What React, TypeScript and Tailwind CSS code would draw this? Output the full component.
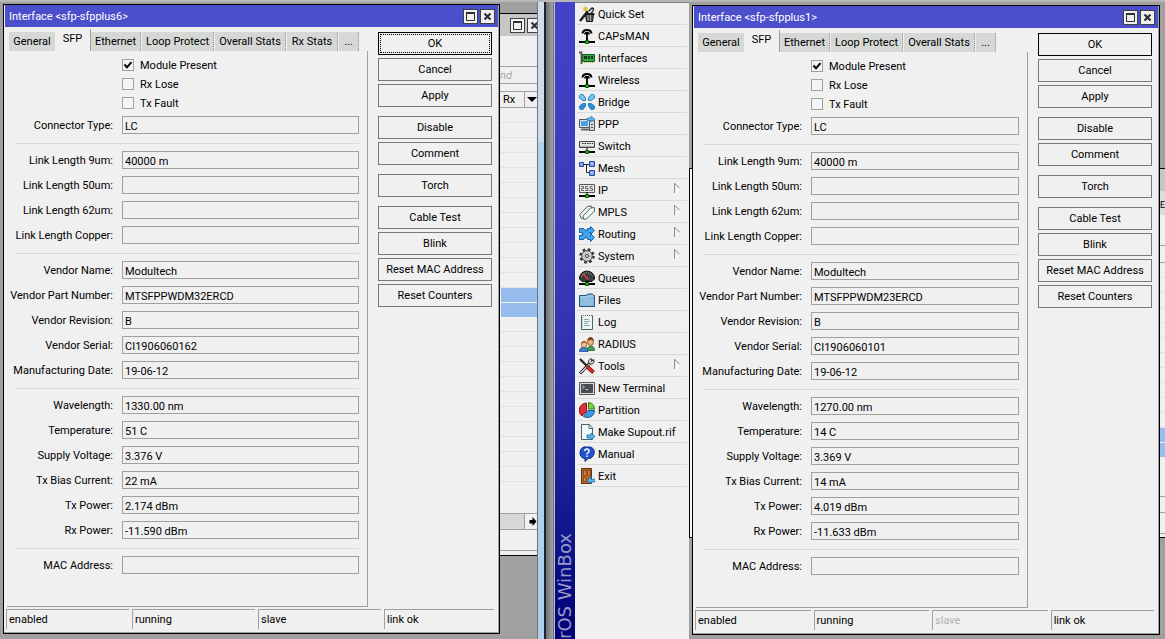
import { useId, type ReactNode } from "react";
import clsx from "clsx";

type Field = { label: string; value: string };

type Status = { text: string; muted?: boolean };

type InterfaceData = {
  name: string;
  tabs: string[];
  groups: Field[][];
  statuses: Status[];
  focused?: boolean;
};

const makeGroups = (
  part: string,
  serial: string,
  wavelength: string,
  temperature: string,
  voltage: string,
  bias: string,
  tx: string,
  rx: string
): Field[][] => [
  [{ label: "Connector Type:", value: "LC" }],
  [
    { label: "Link Length 9um:", value: "40000 m" },
    { label: "Link Length 50um:", value: "" },
    { label: "Link Length 62um:", value: "" },
    { label: "Link Length Copper:", value: "" },
  ],
  [
    { label: "Vendor Name:", value: "Modultech" },
    { label: "Vendor Part Number:", value: part },
    { label: "Vendor Revision:", value: "B" },
    { label: "Vendor Serial:", value: serial },
    { label: "Manufacturing Date:", value: "19-06-12" },
  ],
  [
    { label: "Wavelength:", value: wavelength },
    { label: "Temperature:", value: temperature },
    { label: "Supply Voltage:", value: voltage },
    { label: "Tx Bias Current:", value: bias },
    { label: "Tx Power:", value: tx },
    { label: "Rx Power:", value: rx },
  ],
  [{ label: "MAC Address:", value: "" }],
];

const sfp6: InterfaceData = {
  name: "sfp-sfpplus6",
  tabs: ["Ethernet", "Loop Protect", "Overall Stats", "Rx Stats", "..."],
  groups: makeGroups(
    "MTSFPPWDM32ERCD",
    "CI1906060162",
    "1330.00 nm",
    "51 C",
    "3.376 V",
    "22 mA",
    "2.174 dBm",
    "-11.590 dBm"
  ),
  statuses: [
    { text: "enabled" },
    { text: "running" },
    { text: "slave" },
    { text: "link ok" },
  ],
  focused: true,
};

const sfp1: InterfaceData = {
  name: "sfp-sfpplus1",
  tabs: ["Ethernet", "Loop Protect", "Overall Stats", "..."],
  groups: makeGroups(
    "MTSFPPWDM23ERCD",
    "CI1906060101",
    "1270.00 nm",
    "14 C",
    "3.369 V",
    "14 mA",
    "4.019 dBm",
    "-11.633 dBm"
  ),
  statuses: [
    { text: "enabled" },
    { text: "running" },
    { text: "slave", muted: true },
    { text: "link ok" },
  ],
};

const buttonGroups = [
  ["OK", "Cancel", "Apply"],
  ["Disable", "Comment"],
  ["Torch"],
  ["Cable Test", "Blink", "Reset MAC Address", "Reset Counters"],
];

function WindowButton({ kind }: { kind: "maximize" | "close" }) {
  return (
    <button
      aria-label={kind}
      className="flex size-[15px] shrink-0 items-center justify-center border border-[#404040] bg-[#f0f0f0]"
    >
      <svg viewBox="0 0 11 11" className="size-[11px]" fill="none" stroke="#303030">
        {kind === "maximize" ? (
          <>
            <path d="M1.5 1.5h8v8h-8z" />
            <path d="M1 2h9" strokeWidth="2" />
          </>
        ) : (
          <path d="M2.5 2.5l6 6M8.5 2.5l-6 6" strokeWidth="2.2" />
        )}
      </svg>
    </button>
  );
}

function CheckRow({ label, checked }: { label: string; checked?: boolean }) {
  return (
    <label className="flex h-3 items-center gap-1.5">
      <span className="grid size-3">
        <input
          type="checkbox"
          defaultChecked={checked}
          className="peer col-start-1 row-start-1 size-3 appearance-none border border-[#a0a0a0] bg-[#f4f4f4]"
        />
        <svg
          viewBox="0 0 12 12"
          className="pointer-events-none invisible col-start-1 row-start-1 size-3 peer-checked:visible"
          fill="none"
          stroke="#000"
          strokeWidth="2"
        >
          <path d="M2.5 5.5l2.5 2.8L9.5 3.2" />
        </svg>
      </span>
      <span className="pt-0.5">{label}</span>
    </label>
  );
}

function FieldRow({ label, value }: Field) {
  const id = useId();
  return (
    <div className="flex h-[18px] items-center gap-[9px]">
      <label htmlFor={id} className="w-[106px] shrink-0 pt-0.5 text-right whitespace-nowrap">
        {label}
      </label>
      <input
        id={id}
        readOnly
        defaultValue={value}
        className="h-[18px] min-w-0 flex-1 border border-[#a0a0a0] bg-[#f0f0f0] px-0.5 pt-0.5 outline-none"
      />
    </div>
  );
}

function InterfaceDialog({ data }: { data: InterfaceData }) {
  return (
    <section className="border border-black bg-[#f0f0f0]">
      <div className="border-r border-b border-[#a0a0a0] pb-[3px]">
        <header className="ml-px flex h-[22px] items-center gap-0.5 bg-[#4c4fcb] pr-[3px] pl-1 text-white">
          <h2 className="flex-1 pt-0.5 whitespace-nowrap">Interface &lt;{data.name}&gt;</h2>
          <WindowButton kind="maximize" />
          <WindowButton kind="close" />
        </header>

        <div className="flex gap-2.5 pr-1.5 pl-[3px]">
          <div className="min-w-0 flex-1">
            <div role="tablist" className="flex h-6 items-end pt-0.5 pl-0.5">
              <button role="tab" className="h-[19px] w-[46px] bg-[#d6d8d6]">
                General
              </button>
              <button
                role="tab"
                aria-selected
                className="h-[22px] w-9 border-r border-[#a0a0a0] pb-0.5"
              >
                SFP
              </button>
              {data.tabs.map((tab) => (
                <button
                  key={tab}
                  role="tab"
                  className={clsx(
                    "mr-px h-[19px] shrink-0 border-r border-dotted border-[#909090] bg-[#d6d8d6] whitespace-nowrap",
                    tab === "Ethernet" && "w-[50px]",
                    tab === "Loop Protect" && "w-[72px]",
                    tab === "Overall Stats" && "w-[71px]",
                    tab === "Rx Stats" && "w-[51px]",
                    tab === "..." && "w-5"
                  )}
                >
                  {tab}
                </button>
              ))}
            </div>

            <div className="border-r border-b border-[#a0a0a0] pt-2 pr-2 pb-8">
              <div className="mb-[7px] flex flex-col gap-[7px] pl-[115px]">
                <CheckRow label="Module Present" checked />
                <CheckRow label="Rx Lose" />
                <CheckRow label="Tx Fault" />
              </div>
              {data.groups.map((group, i) => (
                <div key={i}>
                  {i > 0 && <hr className="mt-[9px] mb-[7px] ml-2 border-[#d8dcd8]" />}
                  <div className="flex flex-col gap-[7px]">
                    {group.map((field) => (
                      <FieldRow key={field.label} {...field} />
                    ))}
                  </div>
                </div>
              ))}
            </div>
          </div>

          <div className="flex w-[114px] shrink-0 flex-col gap-[9px] pt-[5px]">
            {buttonGroups.map((group) => (
              <div key={group[0]} className="flex flex-col gap-[3px]">
                {group.map((text) => (
                  <button
                    key={text}
                    className={clsx(
                      "h-[23px] border p-px whitespace-nowrap",
                      text === "OK" ? "border-black" : "border-[#787878]"
                    )}
                  >
                    <span
                      className={clsx(
                        "flex h-full items-center justify-center border",
                        text === "OK" && data.focused
                          ? "border-dotted border-black"
                          : "border-transparent"
                      )}
                    >
                      {text}
                    </span>
                  </button>
                ))}
              </div>
            ))}
          </div>
        </div>

        <footer className="mt-0.5 grid grid-cols-[123fr_123fr_123fr_110fr] gap-[3px] pr-1 pl-0.5">
          {data.statuses.map((status) => (
            <span
              key={status.text}
              className={clsx(
                "h-5 border-t border-l border-[#a0a0a0] pl-0.5 leading-5",
                status.muted && "text-[#b0b0b0]"
              )}
            >
              {status.text}
            </span>
          ))}
        </footer>
      </div>
    </section>
  );
}

function Icon({ children }: { children: ReactNode }) {
  return (
    <svg viewBox="0 0 16 16" className="size-4 shrink-0" fill="none">
      {children}
    </svg>
  );
}

const netBase = (
  <>
    <path d="M0 14h16" stroke="#000" strokeWidth="2" />
    <path d="M8 10v3" stroke="#000" />
    <path d="M6.5 12.5h3v3h-3z" fill="#19b319" stroke="#0a5a0a" />
  </>
);

const antenna = (
  <Icon>
    <path d="M3.5 5.5C4 .8 12 .8 12.500 5.5" stroke="#000" strokeWidth="2" />
    <path d="M6 6.5C6 4 10 4 10 6.5M8 4v8" stroke="#000" strokeWidth="1.8" />
    {netBase}
  </Icon>
);

const menu: { text: string; icon: ReactNode; sub?: boolean }[] = [
  {
    text: "Quick Set",
    icon: (
      <Icon>
        <path d="M1 15L9 5" stroke="#222" strokeWidth="2.6" />
        <path d="M6.5 8h8l-1 7.5h-6z" fill="#555" stroke="#111" />
        <path d="M9 9v6M11.5 9v6" stroke="#aaa" />
        <path d="M6 8h9.5" stroke="#111" strokeWidth="1.6" />
        <path d="M12 7c3-2 3-5 1-5l-3 3" stroke="#222" strokeWidth="1.4" />
        <path d="M6.5 0v6M3.5 3h6M4.5 1l4 4M8.5 1l-4 4" stroke="#e0b820" />
      </Icon>
    ),
  },
  { text: "CAPsMAN", icon: antenna },
  {
    text: "Interfaces",
    icon: (
      <Icon>
        <path d="M0 2.5h2.5V14" stroke="#555" strokeWidth="1.8" />
        <path d="M3.5 4.5h12v7h-12z" fill="#39a845" stroke="#14602a" />
        <path d="M5 6h3v3H5zM9 6h2v3H9zM12 6h2v3h-2z" fill="#143d1c" />
        <path d="M5 12.5h9" stroke="#c9a62c" strokeDasharray="1 1" />
      </Icon>
    ),
  },
  { text: "Wireless", icon: antenna },
  {
    text: "Bridge",
    icon: (
      <Icon>
        <g stroke="#1769aa" strokeWidth=".8">
          <path d="M1.500 .5h2.500l2.500 3.500v2.500H4L.5 4V1.500z" fill="#72c7f5" />
          <path d="M14.500 .5H12L9.500 4v2.500H12L15.500 4V1.500z" fill="#72c7f5" />
          <path d="M1.500 15.500h2.500L6.500 12V9.500H4L.5 12v2.500z" fill="#2d91de" />
          <path d="M14.500 15.500H12L9.500 12V9.500H12l3.500 2.500v2.500z" fill="#2d91de" />
        </g>
      </Icon>
    ),
  },
  {
    text: "PPP",
    icon: (
      <Icon>
        <path d="M10.5 4.5h5v10h-5z" fill="#d4d8dc" stroke="#555" />
        <path d="M.5 3.5h10v8H.5z" fill="#dfe4e8" stroke="#555" />
        <path d="M2 5h7v5H2z" fill="#4aa0e6" />
        <path d="M2 13.5h8" stroke="#666" strokeWidth="2" />
        <path d="M12 8.5h2M12 11.5h2" stroke="#555" />
        <path d="M8 2h4V0l4 3.5L12 6V4.5H8z" fill="#55b8f2" stroke="#1769aa" strokeWidth=".6" />
      </Icon>
    ),
  },
  {
    text: "Switch",
    icon: (
      <Icon>
        <path d="M.5 3.5h15v6H.5z" fill="#e4e4e4" stroke="#444" />
        <path d="M3 5.5h11" stroke="#222" strokeDasharray="1.5 1" />
        <path d="M1 8.5h14" stroke="#aaa" />
        {netBase}
      </Icon>
    ),
  },
  {
    text: "Mesh",
    icon: (
      <Icon>
        <path d="M4 4.5h7M7.5 4v8.5H11" stroke="#222" />
        <g fill="#7da4f5" stroke="#274a9c">
          <path d="M.5 2.5h4v4h-4zM10.5 1.5h5v5h-5zM10.5 10.5h5v5h-5z" />
        </g>
        <path d="M2 4h1M12 3.500h2M12 12.500h2" stroke="#d6e3ff" />
      </Icon>
    ),
  },
  {
    text: "IP",
    sub: true,
    icon: (
      <Icon>
        <path d="M.5 2.5h15v8H.5z" fill="#eee" stroke="#555" />
        <path
          d="M2 4.5h2.5v2h-2v2H5M9 4.5H6.500v2H9v2H6M13.500 4.500H11v2h2.500v2h-3"
          stroke="#555"
          strokeWidth=".9"
        />
        {netBase}
      </Icon>
    ),
  },
  {
    text: "MPLS",
    sub: true,
    icon: (
      <Icon>
        <g fill="#f6faf9" stroke="#466" strokeLinejoin="round">
          <path d="M.7 10.5L8.500 2.500l4-.5.5 3.500-8 8.500-3 .3z" />
          <path d="M4 12L11.500 4l3.800-.5.2 3.500-8 8-3 .2z" />
        </g>
      </Icon>
    ),
  },
  {
    text: "Routing",
    sub: true,
    icon: (
      <Icon>
        <g stroke="#1565a8" strokeWidth="5">
          <path d="M0 4.500h3.500l6.500 7h3M0 11.500h3.500l6.500-7h3" />
        </g>
        <path d="M11.500 .5l4 4-4 4zM11.500 7.500l4 4-4 4z" fill="#43a5ee" stroke="#1565a8" />
        <path d="M.7 4.500h3l6.500 7h3M.7 11.500h3l6.500-7h3" stroke="#43a5ee" strokeWidth="3.200" />
      </Icon>
    ),
  },
  {
    text: "System",
    sub: true,
    icon: (
      <Icon>
        <circle cx="8" cy="8" r="6.5" stroke="#333" strokeWidth="2.4" strokeDasharray="2.6 2.5" />
        <circle cx="8" cy="8" r="5.3" fill="#d8d8d8" stroke="#444" />
        <circle cx="8" cy="8" r="3" stroke="#999" strokeDasharray="1 1" />
        <circle cx="8" cy="8" r="1.5" fill="#fff" stroke="#333" />
      </Icon>
    ),
  },
  {
    text: "Queues",
    icon: (
      <Icon>
        <path d="M.5 9C0-1.5 16-1.5 15.5 9L13 11.5H3z" fill="#3c3c3c" stroke="#111" />
        <path d="M2.5 6.5C4 1.5 12 1.5 13.5 6.5" stroke="#999" strokeDasharray="1 1" />
        <path d="M3.5 3.5l6 6" stroke="#f04030" strokeWidth="1.3" />
        {netBase}
      </Icon>
    ),
  },
  {
    text: "Files",
    icon: (
      <Icon>
        <path d="M.5 3.5h7l1-1.500h5l1 1.500h1v11H.5z" fill="#79aed4" stroke="#28577c" />
        <path d="M1.5 5.5h13v8h-13z" fill="#8fbfe0" />
        <path d="M1 5h7l1-1h5" stroke="#c6e1f3" />
      </Icon>
    ),
  },
  {
    text: "Log",
    icon: (
      <Icon>
        <path d="M2.5 1.5h11v14h-11z" fill="#eef6f4" stroke="#466" />
        <path d="M3 1.5h10" stroke="#eef6f4" strokeDasharray="1 1" />
        <path d="M5 5.5h5M5 7.5h6M5 9.5h4M5 11.5h6" stroke="#8aa" />
        <path d="M3.5 3v12" stroke="#9bb" strokeDasharray="1 1" />
      </Icon>
    ),
  },
  {
    text: "RADIUS",
    icon: (
      <Icon>
        <path d="M8 14c0-5 7.5-5 7.5-.5v1H8z" fill="#3fa650" stroke="#17602a" strokeWidth=".8" />
        <ellipse cx="11.5" cy="5.5" rx="3" ry="4" fill="#e8b27a" stroke="#7a3d12" strokeWidth=".8" />
        <path d="M8.5 5c0-5 6.5-5 6 .5-1-2-4-2-6-.5z" fill="#8b3d12" />
        <path d="M.5 15.5c0-6 8.5-6 8.500 0z" fill="#3585d4" stroke="#164c86" strokeWidth=".8" />
        <ellipse cx="5" cy="8.5" rx="2.6" ry="3.2" fill="#f2c894" stroke="#7a3d12" strokeWidth=".8" />
        <path d="M2.300 8c0-4.500 6-4.500 5.500 0-1-1.500-4-1.500-5.500 0z" fill="#b06820" />
      </Icon>
    ),
  },
  {
    text: "Tools",
    sub: true,
    icon: (
      <Icon>
        <path d="M1 15.5L11 5" stroke="#222" strokeWidth="3" />
        <path d="M1.5 15L11 5.5" stroke="#ddd" strokeWidth="1.2" />
        <path d="M14.5 1.5l-2 2 .5-2.5c-3-.5-4 2-3 4 2 2 5 1 5-2z" fill="#ddd" stroke="#222" />
        <path d="M1 1l7 7" stroke="#222" strokeWidth="2.2" />
        <path d="M8 8.5l6.500 6" stroke="#7a1010" strokeWidth="3.8" />
        <path d="M8.5 9l5.500 5" stroke="#e83a3a" strokeWidth="2" />
      </Icon>
    ),
  },
  {
    text: "New Terminal",
    icon: (
      <Icon>
        <path d="M.5 2.5h15v12H.5z" fill="#ddd" stroke="#555" />
        <path d="M2 4h12v9H2z" fill="#4a4e52" />
        <path d="M3.5 5.5l2 1.500-2 1.500M6.500 9.500h2.500" stroke="#ccc" />
      </Icon>
    ),
  },
  {
    text: "Partition",
    icon: (
      <Icon>
        <path d="M7.5 1v8L3 14C-2 10 0 1.5 7.5 1z" fill="#dd2f3c" stroke="#8a101a" />
        <path d="M9.5 .5c4 .5 6 3 6 6.5h-6z" fill="#7fce3e" stroke="#3a7d12" />
        <path d="M4.5 14.5l4.500-6h6.500c0 6-6 8.500-11 6z" fill="#3f9be0" stroke="#155a94" />
      </Icon>
    ),
  },
  {
    text: "Make Supout.rif",
    icon: (
      <Icon>
        <path d="M2.5 .5h8l3 3.500v11.500h-11z" fill="#f2fafa" stroke="#466" />
        <path d="M10 .5v4h3.5" stroke="#466" />
        <path d="M8 11h4V9l4 3.500-4 3.200V14H8z" fill="#55b8f2" stroke="#1769aa" strokeWidth=".8" />
      </Icon>
    ),
  },
  {
    text: "Manual",
    icon: (
      <Icon>
        <path
          d="M5 1h6c6 1 5 9 1 11l-3 .5-3 3V12.500C-1 12 0 2 5 1z"
          fill="#2452d0"
          stroke="#0d2a80"
        />
        <path
          d="M5.8 5c0-3 4.500-2.500 4.200 0C10 6.500 8 6.500 8 8.500M8 9.500V11"
          stroke="#fff"
          strokeWidth="1.5"
        />
      </Icon>
    ),
  },
  {
    text: "Exit",
    icon: (
      <Icon>
        <path d="M2.5 .5h10v15h-10z" fill="#b5682c" stroke="#5e2e0e" />
        <path
          d="M4.5 2.5H7v5H4.500zM8.500 2.500H11v5H8.500zM4.500 9.500H7v4H4.500z"
          fill="#d28a48"
          stroke="#7d4015"
          strokeWidth=".8"
        />
        <path d="M16 11.200h-4V9l-4 3.500 4 3.300V14h4z" fill="#55b8f2" stroke="#1769aa" strokeWidth=".8" />
      </Icon>
    ),
  },
];

function SideMenu() {
  return (
    <nav className="border-t border-[#808080] bg-[#f0f0f0] px-0.5">
      <ul>
        {menu.map((item) => (
          <li key={item.text} className="border-b border-[#d8dcd8]">
            <a href="#" className="flex h-[21px] items-center gap-[3px] pr-1.5 pl-0.5">
              {item.icon}
              <span className="flex-1 pt-0.5 whitespace-nowrap">{item.text}</span>
              {item.sub && (
                <svg viewBox="0 0 7 10" className="mb-1 h-2.5 w-[7px] shrink-0" fill="none">
                  <path d="M.5 0v10M.5 .5l5.5 5" stroke="#909090" />
                  <path d="M6 5.5L1 9.5" stroke="#fff" />
                </svg>
              )}
            </a>
          </li>
        ))}
      </ul>
    </nav>
  );
}

function GridRows({ count }: { count: number }) {
  return (
    <>
      {Array.from({ length: count }, (_, i) => (
        <div key={i} className="h-[15px] border-b border-[#e2e2e2]" />
      ))}
    </>
  );
}

// Edge of the interface list that shows beside the left dialog
function ListEdge() {
  return (
    <div className="overflow-hidden pt-[13px]">
      <div className="border-y border-black bg-[#f0f0f0]">
        <div className="flex h-[22px] items-center gap-0.5 bg-[#c6c6c6] pl-2.5">
          <WindowButton kind="maximize" />
          <WindowButton kind="close" />
        </div>
        <div className="pt-[30px] pb-[7px]">
          <input
            aria-label="Find"
            placeholder="nd"
            className="h-[18px] w-full border-y border-[#a0a0a0] italic placeholder:text-[#a8a8a8]"
          />
        </div>
        <div className="flex h-[17px] items-center border-y border-[#a0a0a0]">
          <span className="w-[25px] border-r border-[#a0a0a0] pl-[3px]">Rx</span>
          <svg viewBox="0 0 12 6" className="h-[6px] w-3">
            <path d="M2 0h10L7 5z" fill="#000" />
          </svg>
        </div>
        <GridRows count={12} />
        <div className="flex flex-col gap-px pl-px">
          <div className="h-3.5 bg-[#97bcee]" />
          <div className="h-3.5 bg-[#97bcee]" />
        </div>
        <GridRows count={11} />
        <div className="mt-[31px] flex h-[17px] border-y border-[#a0a0a0]">
          <div className="w-[25px] border-r border-[#a0a0a0] bg-[#d6d8d6]" />
          <svg viewBox="0 0 12 15" className="h-[15px] w-3">
            <path d="M4.500 6h3V3l4 4.500-4 4.500V9.500h-3z" fill="#000" />
          </svg>
        </div>
        <div className="h-[21px] border-b border-[#a0a0a0]" />
        <div className="h-1" />
      </div>
    </div>
  );
}

function RightEdge() {
  return (
    <div className="overflow-hidden pt-[168px]">
      <div className="border-y border-black bg-[#f0f0f0]">
        <div className="h-[22px] bg-[#c6c6c6]" />
        <div className="h-6 bg-[#dcdcdc] text-[9px] leading-7">E</div>
        <div className="h-[31px] border-b border-[#a0a0a0]" />
        <div className="h-[17px] border-b border-[#a0a0a0]" />
        <GridRows count={11} />
        <div className="flex flex-col gap-px">
          <div className="h-3.5 bg-[#97bcee]" />
          <div className="h-3.5 bg-[#97bcee]" />
        </div>
        <div className="h-10 border-b border-[#a0a0a0]" />
        <div className="h-4 border-b border-[#a0a0a0]" />
        <div className="h-[21px] border-b border-[#a0a0a0]" />
        <div className="h-[3px]" />
      </div>
    </div>
  );
}

export default function App() {
  return (
    <main className="grid min-h-screen grid-cols-[3px_minmax(0,497fr)_37px_18px_20px_114px_3px_minmax(0,468fr)_5px] overflow-hidden border-t-2 border-[#b8b8b8] bg-[#a0a0a0] font-['Roboto','Liberation_Sans',sans-serif] text-[11px] leading-4 text-black">
      <div />
      <div className="pt-0.5">
        <InterfaceDialog data={sfp6} />
      </div>
      <div className="-mt-0.5 grid">
        <ListEdge />
      </div>

      {/* frames of the two outer windows */}
      <div className="-mt-0.5 flex">
        <div className="w-px bg-[#6c7680]" />
        <div className="flex w-1.5 flex-col">
          <div className="h-[142px] bg-[#cfdce9]" />
          <div className="flex-1 bg-[#b3cfeb]" />
        </div>
        <div className="w-0.5 bg-[#202428]" />
        <div className="flex-1 bg-linear-to-r from-[#6f7478] to-[#a0a4a8]" />
        <div className="w-px bg-[#707070]" />
        <div className="w-px bg-[#c0c0c0]" />
      </div>

      <div className="flex items-end justify-center overflow-hidden bg-linear-to-b from-[#4343c8] via-[#3535b4] to-[#000078]">
        <span className="rotate-180 font-['DejaVu_Sans'] text-[18px] leading-5 whitespace-nowrap text-[#9a9ac8] [writing-mode:vertical-rl]">
          rOS WinBox
        </span>
      </div>
      <SideMenu />

      <div className="pt-[166px]">
        <div className="h-[370px] border-y border-l border-black bg-[#f8f8f8]" />
      </div>
      <div className="pt-[3px]">
        <InterfaceDialog data={sfp1} />
      </div>
      <div className="-mt-0.5 grid">
        <RightEdge />
      </div>
    </main>
  );
}
